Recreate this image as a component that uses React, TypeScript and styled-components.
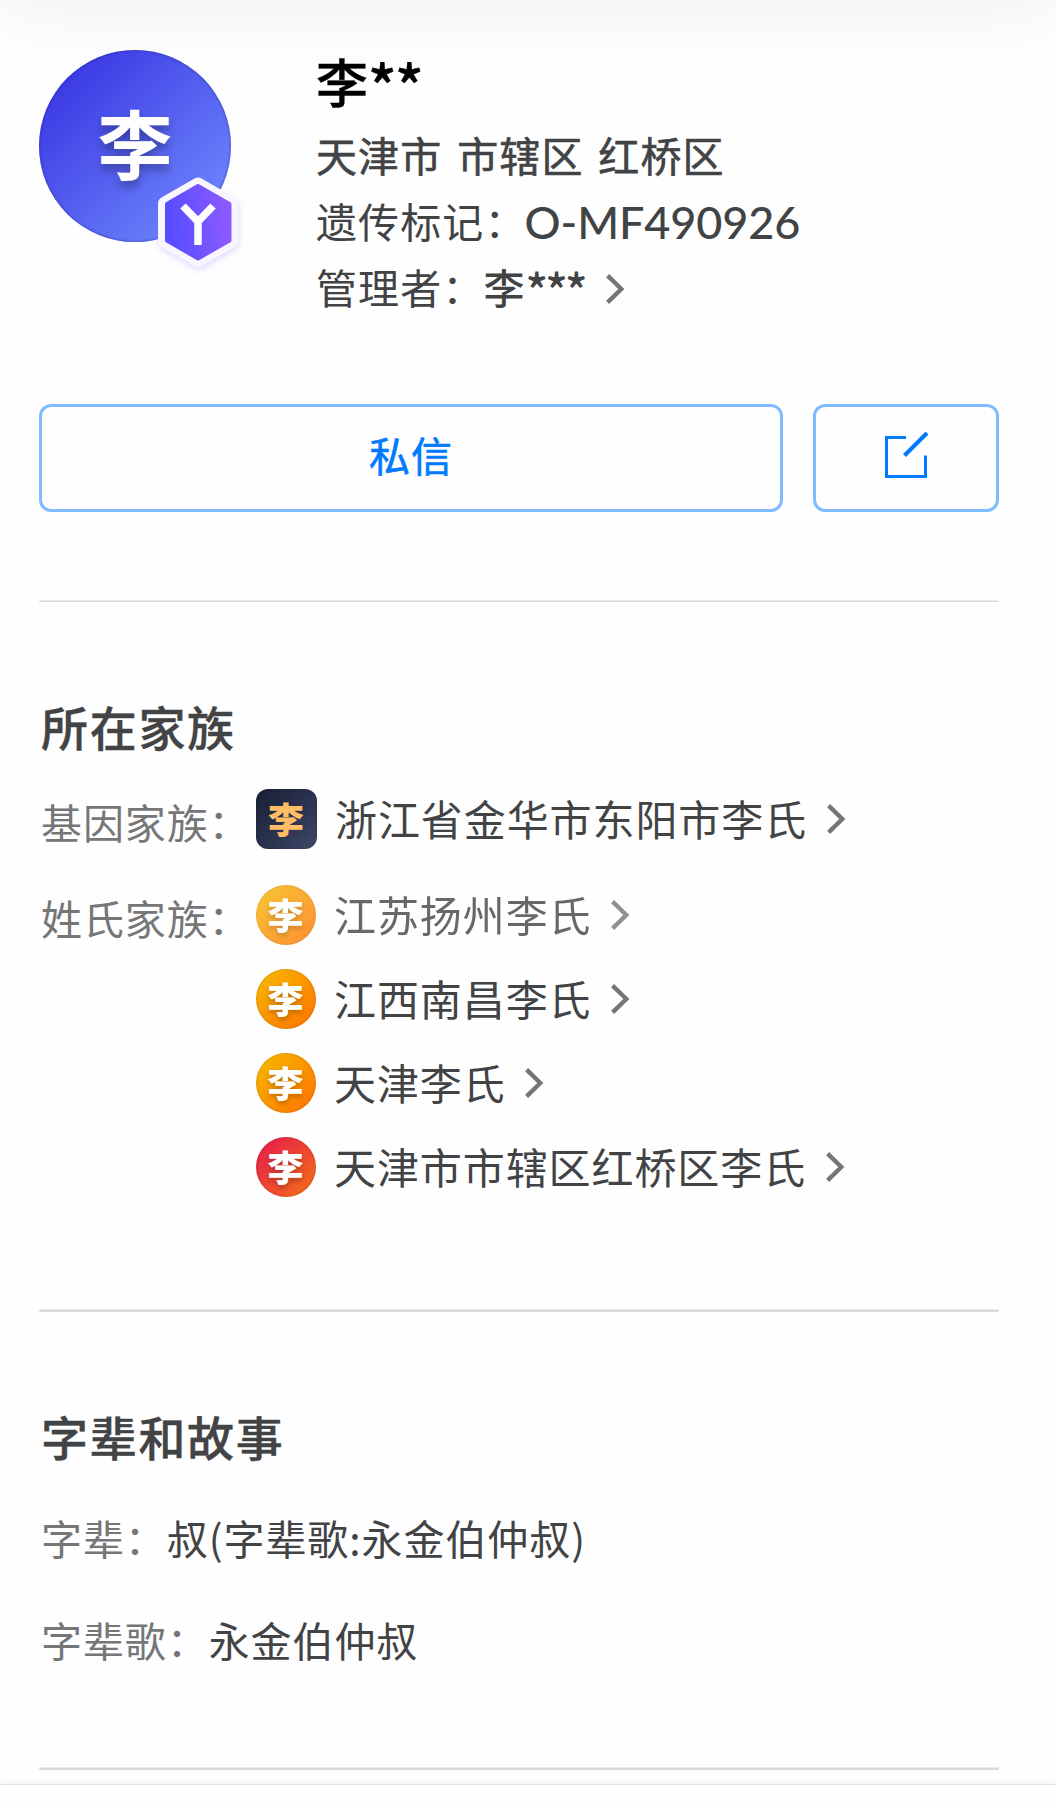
import React from "react";
import styled, { createGlobalStyle } from "styled-components";

const cjk = `"Noto Sans CJK SC", "Noto Sans", sans-serif`;

const GlobalStyle = createGlobalStyle`
  * { box-sizing: border-box; }
  body { margin: 0; background: #fefefe; }
`;

const Page = styled.main`
  position: relative;
  width: 1056px;
  height: 1804px;
  overflow: hidden;
  padding: 50px 57px 0 39px;
  background: #fefefe;
  font-family: ${cjk};
  font-size: 41px;
  letter-spacing: 1.1px;
  color: #424345;
  white-space: nowrap;
`;

const TopShade = styled.div`
  position: absolute;
  left: 0;
  right: 0;
  top: -60px;
  height: 60px;
  box-shadow: 0 0 80px rgba(0, 0, 0, 0.08);
`;

const Header = styled.header`
  position: relative;
  display: flex;
  gap: 85px;
  height: 354px;
`;

const Avatar = styled.div`
  position: relative;
  display: flex;
  align-items: center;
  justify-content: center;
  width: 192px;
  height: 192px;
  border-radius: 50%;
  background: linear-gradient(135deg, #3835e2 8%, #4f57ed 42%, #6f89fd 92%);
  box-shadow: inset 0 0 2px 1px rgba(30, 30, 150, 0.35);
  color: #fff;
  font-size: 75px;
  font-weight: 700;
  line-height: 184px;
  letter-spacing: 0;
  padding-bottom: 8px;
  text-shadow: 0 6px 9px rgba(0, 0, 0, 0.3);
`;

const HexBadge = styled.svg`
  position: absolute;
  left: 113px;
  top: 121px;
  width: 92px;
  height: 102px;
  filter: drop-shadow(1px 3px 3px rgba(120, 80, 255, 0.2));
`;

const Info = styled.div`
  display: flex;
  flex-direction: column;
`;

const Name = styled.h1`
  margin: 0 0 9px;
  font-size: 52px;
  font-weight: 500;
  line-height: 62px;
  height: 62px;
  letter-spacing: 0;
  color: #000;
  -webkit-text-stroke: 0.4px #000;
`;

const Stars = styled.span<{ $drop: number; $tight: number }>`
  font-size: 1.14em;
  line-height: 1px;
  letter-spacing: -${(p) => p.$tight}px;
  vertical-align: -${(p) => p.$drop}px;
`;

const InfoLine = styled.div<{ $medium?: boolean }>`
  display: flex;
  align-items: center;
  height: 66px;
  line-height: 66px;
  word-spacing: 4.6px;
  -webkit-text-stroke: ${(p) => (p.$medium ? 0.6 : 0)}px #424345;
`;

const Marker = styled.span`
  font-family: Lato, ${cjk};
  font-size: 45px;
  font-weight: 500;
  line-height: 66px;
  letter-spacing: -0.1px;
  padding-top: 4px;
  margin-left: -2px;
`;

const Manager = styled.span`
  margin-left: -1px;
  font-weight: 500;
`;

const Actions = styled.div`
  display: flex;
  gap: 30px;
`;

const Button = styled.button<{ $width: number }>`
  display: flex;
  align-items: center;
  justify-content: center;
  width: ${(p) => p.$width}px;
  height: 108px;
  padding: 0 0 6px 2px;
  border: 3px solid #7fbcff;
  border-radius: 12px;
  background: transparent;
  color: #007aff;
  font-family: inherit;
  font-size: 41px;
  letter-spacing: 1.1px;
  -webkit-text-stroke: 0.6px #007aff;
`;

const ButtonText = styled.span`
  padding: 0 2px 2px 0;
`;

const Divider = styled.hr<{ $top: number; $thick: number }>`
  margin: ${(p) => p.$top}px 0 0;
  border: 0;
  border-radius: 2px;
  height: ${(p) => p.$thick}px;
  background: linear-gradient(#ebebec 1px, #dadadc 1px);
`;

const Title = styled.h2`
  margin: 94px 0 0 2px;
  font-size: 47px;
  font-weight: 500;
  line-height: 60px;
  height: 60px;
  letter-spacing: 1.7px;
  -webkit-text-stroke: 0.4px #424345;
`;

const Group = styled.div<{ $top: number }>`
  display: flex;
  margin-top: ${(p) => p.$top}px;
`;

const GroupLabel = styled.div`
  width: 217px;
  padding: 2px 0 0 2px;
  height: 60px;
  line-height: 60px;
  letter-spacing: 0.9px;
  color: #757678;
`;

const Families = styled.div`
  display: flex;
  flex-direction: column;
  gap: 24px;
`;

const Family = styled.div<{ $faded?: boolean }>`
  display: flex;
  align-items: center;
  height: 60px;
  line-height: 60px;
  opacity: ${(p) => (p.$faded ? 0.8 : 1)};
`;

const Crest = styled.span<{ $bg: string; $square?: boolean }>`
  display: flex;
  justify-content: center;
  width: ${(p) => (p.$square ? 61 : 60)}px;
  height: 60px;
  padding-right: 1px;
  margin-right: 18px;
  border-radius: ${(p) => (p.$square ? "12px" : "50%")};
  background: ${(p) => p.$bg};
  box-shadow: inset 0 0 2px 1px rgba(0, 0, 0, 0.1);
  color: ${(p) => (p.$square ? "#ffbe66" : "#fff")};
  font-size: 36px;
  font-weight: 900;
  line-height: 58px;
  letter-spacing: 0;
  text-shadow: ${(p) => (p.$square ? "none" : "0 3px 5px rgba(0,0,0,.24)")};
`;

const FamilyName = styled.span`
  padding-bottom: 3px;
  font-size: 42px;
  letter-spacing: 0.92px;
`;

const Detail = styled.div<{ $top: number }>`
  display: flex;
  height: 60px;
  margin: ${(p) => p.$top}px 0 0 2px;
  line-height: 60px;
  letter-spacing: 0.92px;
`;

const DetailLabel = styled.span`
  color: #757678;
`;

const BottomBar = styled.footer`
  position: absolute;
  left: 0;
  right: 0;
  bottom: 0;
  height: 20px;
  border-top: 1px solid #e2e2e2;
  background: #fefefe;
  box-shadow: 0 0 9px rgba(0, 0, 0, 0.08);
`;

const ChevronSvg = styled.svg<{ $gap: number; $drop: number }>`
  flex: none;
  width: 19px;
  height: 30px;
  margin: ${(p) => p.$drop}px 0 0 ${(p) => p.$gap}px;
`;

const Chevron = ({ gap = 19.5, drop = 0 }: { gap?: number; drop?: number }) => (
  <ChevronSvg $gap={gap} $drop={drop} viewBox="0 0 19 30">
    <path d="M1.6 1.6 L15.3 15 L1.6 28.4" fill="none" stroke="#747577" strokeWidth="4.3" />
  </ChevronSvg>
);

const YMark = () => (
  <HexBadge viewBox="152 171 92 102">
    <defs>
      <linearGradient id="hex" x1="0" x2="1" y1="0.4" y2="0.3">
        <stop offset="0" stopColor="#554dff" />
        <stop offset="1" stopColor="#8d5bff" />
      </linearGradient>
    </defs>
    <path
      d="M198 184.500 L231 203.500 V241 L198 260 L165 241 V203.500 Z"
      fill="#f9f5ff"
      stroke="#f9f5ff"
      strokeWidth="14"
      strokeLinejoin="round"
    />
    <path
      d="M198 186 L229.500 204 V240.500 L198 258.500 L167 240.500 V204 Z"
      fill="url(#hex)"
      stroke="url(#hex)"
      strokeWidth="4"
      strokeLinejoin="round"
    />
    <path d="M183 206 L198 221.500 L213 206 M198 220 V245" fill="none" stroke="#fff" strokeWidth="7.500" />
  </HexBadge>
);

const EditIcon = () => (
  <svg width="46" height="48" viewBox="884 431 46 48" fill="none" stroke="#007aff">
    <path d="M906 437.500 H886.500 V476.500 H925.500 V455.500" strokeWidth="3" />
    <path d="M904.500 455.500 L927 433" strokeWidth="4" />
  </svg>
);

const gold = "linear-gradient(135deg, #f8b400 10%, #ff7800 90%)";
const red = "linear-gradient(135deg, #e8204a 10%, #f26a1c 90%)";
const navy = "linear-gradient(135deg, #1b2136 5%, #2a3350 55%, #3f4866 100%)";

const surnameFamilies = [
  { name: "江苏扬州李氏", bg: gold, faded: true },
  { name: "江西南昌李氏", bg: gold },
  { name: "天津李氏", bg: gold },
  { name: "天津市市辖区红桥区李氏", bg: red },
];

export default function App() {
  return (
    <Page>
      <GlobalStyle />
      <TopShade />
      <Header>
        <Avatar>
          李
          <YMark />
        </Avatar>
        <Info>
          <Name>
            李
            <Stars $drop={7} $tight={1.8}>**</Stars>
          </Name>
          <InfoLine $medium>天津市 市辖区 红桥区</InfoLine>
          <InfoLine>
            遗传标记：<Marker>O-MF490926</Marker>
          </InfoLine>
          <InfoLine>
            管理者：
            <Manager>
              李
              <Stars $drop={5} $tight={2.9}>***</Stars>
            </Manager>
            <Chevron gap={21} drop={6} />
          </InfoLine>
        </Info>
      </Header>
      <Actions>
        <Button $width={744}>
          <ButtonText>私信</ButtonText>
        </Button>
        <Button $width={186} aria-label="编辑">
          <EditIcon />
        </Button>
      </Actions>
      <Divider $top={88} $thick={2} />

      <Title>所在家族</Title>
      <Group $top={33}>
        <GroupLabel>基因家族：</GroupLabel>
        <Family>
          <Crest $bg={navy} $square>李</Crest>
          <FamilyName>浙江省金华市东阳市李氏</FamilyName>
          <Chevron />
        </Family>
      </Group>
      <Group $top={36}>
        <GroupLabel>姓氏家族：</GroupLabel>
        <Families>
          {surnameFamilies.map((f) => (
            <Family key={f.name} $faded={f.faded}>
              <Crest $bg={f.bg}>李</Crest>
              <FamilyName>{f.name}</FamilyName>
              <Chevron />
            </Family>
          ))}
        </Families>
      </Group>
      <Divider $top={112} $thick={3} />

      <Title>字辈和故事</Title>
      <Detail $top={41}>
        <DetailLabel>字辈：</DetailLabel>叔(字辈歌:永金伯仲叔)
      </Detail>
      <Detail $top={42}>
        <DetailLabel>字辈歌：</DetailLabel>永金伯仲叔
      </Detail>
      <Divider $top={98} $thick={3} />
      <BottomBar />
    </Page>
  );
}
